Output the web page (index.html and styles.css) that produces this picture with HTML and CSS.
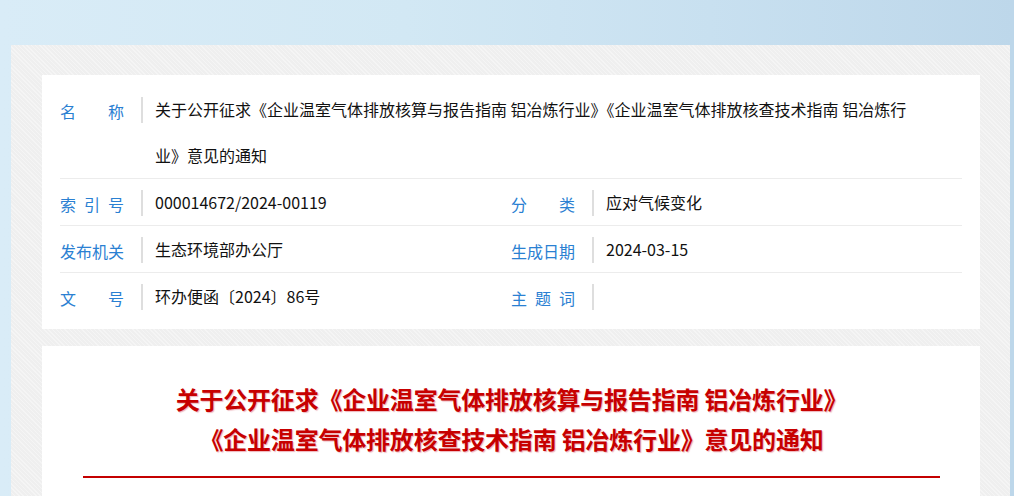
FILE: index.html
```html
<!DOCTYPE html>
<html lang="zh-CN">
<head>
<meta charset="utf-8">
<title>关于公开征求意见的通知</title>
<link rel="stylesheet" href="styles.css">
</head>
<body>
<div class="page">
  <div class="wrap">
    <section class="card info">
      <div class="row">
        <div class="cell full">
          <span class="label">名称</span><span class="sep"></span>
          <span class="value long">关于公开征求《企业温室气体排放核算与报告指南 铝冶炼行业》《企业温室气体排放核查技术指南 铝冶炼行业》意见的通知</span>
        </div>
      </div>
      <div class="row">
        <div class="cell">
          <span class="label">索引号</span><span class="sep"></span>
          <span class="value">000014672/2024-00119</span>
        </div>
        <div class="cell">
          <span class="label">分类</span><span class="sep"></span>
          <span class="value">应对气候变化</span>
        </div>
      </div>
      <div class="row">
        <div class="cell">
          <span class="label">发布机关</span><span class="sep"></span>
          <span class="value">生态环境部办公厅</span>
        </div>
        <div class="cell">
          <span class="label">生成日期</span><span class="sep"></span>
          <span class="value">2024-03-15</span>
        </div>
      </div>
      <div class="row">
        <div class="cell">
          <span class="label">文号</span><span class="sep"></span>
          <span class="value">环办便函〔2024〕86号</span>
        </div>
        <div class="cell">
          <span class="label">主题词</span><span class="sep"></span>
          <span class="value"></span>
        </div>
      </div>
    </section>
    <section class="card article">
      <h1 class="title">关于公开征求《企业温室气体排放核算与报告指南 铝冶炼行业》<br>《企业温室气体排放核查技术指南 铝冶炼行业》意见的通知</h1>
      <div class="rule"></div>
    </section>
  </div>
</div>
</body>
</html>
```
FILE: styles.css
```css
html, body {
  margin: 0;
  padding: 0;
}
body {
  font-family: "Noto Sans CJK SC", "Noto Sans", sans-serif;
  background: linear-gradient(90deg, #d9ecf7 0%, #d2e8f4 40%, #c8e0f0 70%, #bdd7ea 100%);
  height: 496px;
  overflow: hidden;
}
.page {
  padding: 45px 4px 0 11px;
}
.wrap {
  background-color: #efefef;
  background-image: repeating-linear-gradient(45deg, rgba(255,255,255,0.35) 0 1px, transparent 1px 3px);
  padding: 30px 30px 0 31px;
  min-height: 460px;
}
.card {
  background: #fff;
}
.info {
  padding: 11px 18px 10px 18px;
}
.row {
  display: flex;
  border-bottom: 1px solid #ececec;
}
.row:last-child {
  border-bottom: none;
}
.cell {
  flex: 0 0 451px;
  display: flex;
  align-items: flex-start;
}
.cell.full {
  flex: 1 1 auto;
}
.label {
  flex: 0 0 64px;
  width: 64px;
  font-size: 16px;
  line-height: 46px;
  height: 46px;
  color: #2a80d2;
  text-align: justify;
  text-align-last: justify;
  padding-top: 2px;
  box-sizing: border-box;
}
.sep {
  flex: 0 0 2px;
  height: 26px;
  background: #dedede;
  margin: 11px 12px 0 17px;
}
.value {
  font-size: 16px;
  line-height: 46px;
  color: #111;
  min-height: 46px;
}
.value.long {
  max-width: 770px;
}
.article {
  margin-top: 17px;
  padding: 33px 40px 30px 41px;
}
.title {
  margin: 0;
  font-size: 24px;
  line-height: 40px;
  font-weight: bold;
  color: #c70000;
  text-align: center;
  letter-spacing: -0.2px;
  text-shadow: 1px 1px 1px rgba(200, 40, 60, 0.35);
}
.rule {
  height: 2px;
  background: #c40000;
  margin-top: 17px;
}
```
